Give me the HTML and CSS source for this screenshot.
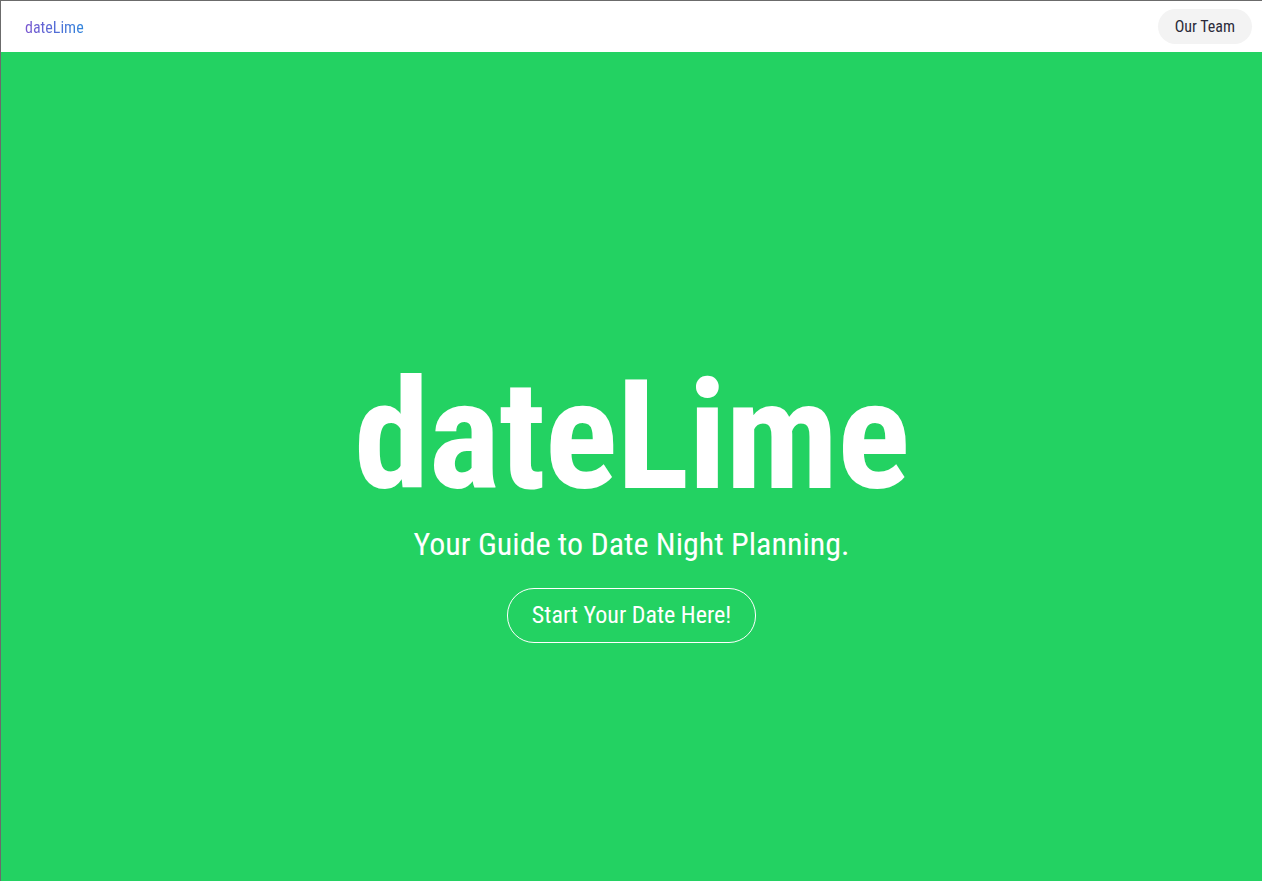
FILE: index.html
```html
<!DOCTYPE html>
<html lang="en">
<head>
<meta charset="utf-8">
<title>dateLime</title>
<link rel="stylesheet" href="styles.css">
</head>
<body>
<div class="page">
  <header class="navbar">
    <a class="brand" href="#">dateLime</a>
    <a class="team-btn" href="#">Our Team</a>
  </header>
  <main class="hero">
    <h1 class="hero-title">dateLime</h1>
    <p class="hero-sub">Your Guide to Date Night Planning.</p>
    <a class="hero-btn" href="#">Start Your Date Here!</a>
  </main>
</div>
</body>
</html>
```
FILE: styles.css
```css
* { box-sizing: border-box; }
html, body { margin: 0; padding: 0; height: 100%; }
body {
  font-family: "Roboto Condensed", Roboto, sans-serif;
  background: #fff;
}
.page {
  height: 100%;
  display: flex;
  flex-direction: column;
  border-top: 1px solid #6b6b6b;
  border-left: 1px solid #6b6b6b;
}
.navbar {
  height: 51px;
  flex: none;
  display: flex;
  align-items: center;
  justify-content: space-between;
  padding: 0 10px 0 24px;
  background: #fff;
}
.brand {
  font-size: 16px;
  text-decoration: none;
  background: linear-gradient(90deg, #7a55d0, #2f85dc);
  -webkit-background-clip: text;
  background-clip: text;
  color: transparent;
  margin-top: 2px;
}
.team-btn {
  font-size: 16px;
  color: #2b2b3a;
  text-decoration: none;
  background: #f3f3f3;
  border-radius: 18px;
  padding: 8px 17px;
  line-height: 19px;
}
.hero {
  flex: 1;
  background: #23d262;
  display: flex;
  flex-direction: column;
  align-items: center;
  justify-content: center;
  color: #fff;
  padding-top: 70px;
}
.hero-title {
  margin: 0;
  font-size: 152px;
  font-weight: 700;
  line-height: 1;
  letter-spacing: -1px;
}
.hero-sub {
  margin: 13px 0 24px;
  font-size: 32px;
  line-height: 1.2;
}
.hero-btn {
  color: #fff;
  text-decoration: none;
  font-size: 24px;
  line-height: 28px;
  border: 1px solid #fff;
  border-radius: 27px;
  padding: 12px 24px 13px;
}
```
